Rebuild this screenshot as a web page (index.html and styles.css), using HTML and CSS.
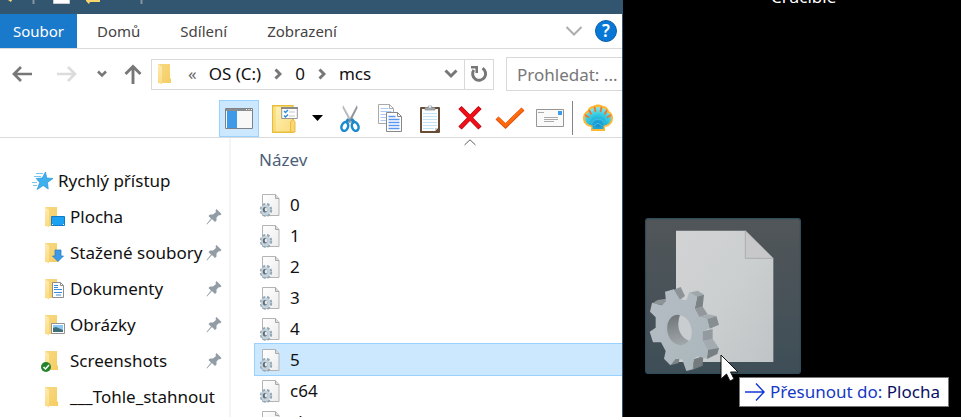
FILE: index.html
```html
<!DOCTYPE html>
<html lang="cs">
<head>
<meta charset="utf-8">
<meta name="viewport" content="width=device-width, initial-scale=1">
<title>mcs</title>
<link rel="stylesheet" href="styles.css">
</head>
<body>
<svg class="defs" aria-hidden="true">
  <defs>
    <linearGradient id="gFolder" x1="0" y1="0" x2="1" y2="1"><stop offset="0" stop-color="#f7d984"/><stop offset="1" stop-color="#f5cd62"/></linearGradient>
    <linearGradient id="gFlap" x1="0" y1="0" x2="0" y2="1"><stop offset="0" stop-color="#ffebb0"/><stop offset="1" stop-color="#fbdb81"/></linearGradient>
    <linearGradient id="gPaper" x1="0" y1="0" x2="1" y2="1"><stop offset="0" stop-color="#fff"/><stop offset="1" stop-color="#ececec"/></linearGradient>
    <linearGradient id="gBoard" x1="0" y1="0" x2="1" y2="1"><stop offset="0" stop-color="#fff3b4"/><stop offset="1" stop-color="#fbdb80"/></linearGradient>
    <linearGradient id="gGhost" x1="0" y1="0" x2="0" y2="1"><stop offset="0" stop-color="#515659"/><stop offset=".5" stop-color="#485258"/><stop offset="1" stop-color="#3e4e57"/></linearGradient>
    <linearGradient id="gSheet" x1="0" y1="0" x2="1" y2="1"><stop offset="0" stop-color="#d2d2d4"/><stop offset=".5" stop-color="#cbcfd0"/><stop offset="1" stop-color="#c1c4c6"/></linearGradient>
    <linearGradient id="gGear" x1="0" y1="0" x2="1" y2="1"><stop offset="0" stop-color="#b5bcc3"/><stop offset="1" stop-color="#aab7bc"/></linearGradient>
    <linearGradient id="gHole" x1="0" y1="0" x2="0" y2="1"><stop offset="0" stop-color="#70767a"/><stop offset="1" stop-color="#a2a8aa"/></linearGradient>
    <radialGradient id="gShell" cx=".5" cy=".8" r=".8"><stop offset="0" stop-color="#1688cc"/><stop offset=".55" stop-color="#2ccbe0"/><stop offset="1" stop-color="#8ceadf"/></radialGradient>
  </defs>
  <symbol id="folder" viewBox="0 0 22 22">
    <path d="M1 1h12v14l1 1v4H1z" fill="url(#gFolder)"/>
    <path d="M1 1l4 3v17.500L1 19z" fill="url(#gFlap)"/>
  </symbol>
  <symbol id="pin" viewBox="0 0 16 16">
    <path d="M10.500 0L15.500 5 14 6.500 13 6 10.500 8.500 10.500 11.500 9 13 6 10 1 15.500.500 15 5 9.500 2.500 7 4 5.500 7 5.500 10 3 9.500 1.500z" fill="#919ca5"/>
  </symbol>
  <symbol id="file" viewBox="0 0 22 24">
    <path d="M3.500 1.500h13l3.500 4v17H3.500z" fill="url(#gPaper)" stroke="#b4b4b4"/>
    <path d="M16.500 1.500v4H20" fill="#ddd" stroke="#a8a8a8"/>
    <ellipse cx="7" cy="17" rx="5" ry="5.800" fill="none" stroke="#93a7b4" stroke-width="2.400" stroke-dasharray="2.600 1.700"/>
    <ellipse cx="6.700" cy="17" rx="4.600" ry="5.300" fill="#c3d2dc"/>
    <ellipse cx="6" cy="16.700" rx="2.200" ry="2.700" fill="#616c75"/>
    <ellipse cx="7" cy="16.400" rx="1.200" ry="2" fill="#e6e9eb"/>
  </symbol>
</svg>

<main class="screen">
  <section class="explorer">
    <div class="titlebar">
      <svg width="150" height="5" viewBox="0 0 150 5" aria-hidden="true">
        <path d="M8 0h4l-1 2z" fill="#f5d778"/>
        <path d="M33.500 0v4M141.500 0v4" stroke="#8793a0" stroke-width="2"/>
        <path d="M53.500-2v5.500h16V-2z" fill="#fff" stroke="#c9ccd2"/>
        <path d="M86 0h14v2H90l-1 2-3-3z" fill="#f9d66c"/>
      </svg>
    </div>

    <nav class="tabs">
      <button class="tab tab-file">Soubor</button>
      <button class="tab">Domů</button>
      <button class="tab">Sdílení</button>
      <button class="tab">Zobrazení</button>
      <button class="expand" aria-label="Rozbalit pás karet"><svg width="18" height="10" viewBox="0 0 18 10"><path d="M1.500 1L9 8.500 16.500 1" fill="none" stroke="#adadad" stroke-width="2"/></svg></button>
      <button class="help" aria-label="Nápověda">?</button>
    </nav>

    <div class="navbar">
      <button class="nav-back" aria-label="Zpět"><svg width="20" height="18" viewBox="0 0 20 18"><path d="M20 9H3M9 2L2 9l7 7" fill="none" stroke="#777" stroke-width="2.700"/></svg></button>
      <button class="nav-forward" aria-label="Vpřed"><svg width="20" height="18" viewBox="0 0 20 18"><path d="M0 9h17M11 2l7 7-7 7" fill="none" stroke="#dcdcdc" stroke-width="2.700"/></svg></button>
      <button class="nav-recent" aria-label="Poslední umístění"><svg width="10" height="8" viewBox="0 0 10 8"><path d="M1 1.500l4 4 4-4" fill="none" stroke="#777" stroke-width="2.500"/></svg></button>
      <button class="nav-up" aria-label="Nahoru"><svg width="18" height="20" viewBox="0 0 18 20"><path d="M9 20V3M1.500 10L9 2.500l7.500 7.500" fill="none" stroke="#777" stroke-width="2.900"/></svg></button>
      <div class="address">
        <svg class="address-icon" width="22" height="22"><use href="#folder"/></svg>
        <span class="overflow">«</span>
        <button class="crumb">OS (C:)</button>
        <svg class="sep" width="8" height="12" viewBox="0 0 8 12"><path d="M1.500 1.500L6 6l-4.500 4.500" fill="none" stroke="#777" stroke-width="3"/></svg>
        <button class="crumb">0</button>
        <svg class="sep" width="8" height="12" viewBox="0 0 8 12"><path d="M1.500 1.500L6 6l-4.500 4.500" fill="none" stroke="#777" stroke-width="3"/></svg>
        <button class="crumb">mcs</button>
        <button class="history" aria-label="Předchozí umístění"><svg width="14" height="10" viewBox="0 0 14 10"><path d="M1.500 1.500L7 7l5.500-5.500" fill="none" stroke="#777" stroke-width="3"/></svg></button>
        <button class="refresh" aria-label="Aktualizovat"><svg width="18" height="18" viewBox="0 0 18 18"><path d="M12.500 3.200A6.500 6.500 0 1 1 3.800 5" fill="none" stroke="#777" stroke-width="3"/><path d="M1 1h7v7H5.500V3.500H1z" fill="#777"/></svg></button>
      </div>
      <input class="search" type="text" placeholder="Prohledat: ..." aria-label="Prohledat">
    </div>

    <div class="toolbar">
      <button class="tool pane" aria-label="Navigační podokno"><svg width="28" height="21" viewBox="0 0 28 21"><path d="M.500.500h27v20H.500z" fill="#f8f8f8" stroke="#7e8286"/><path d="M1 1h26v2H1z" fill="#8a8e91"/><path d="M2 3h10v17H2z" fill="#3e9ae6"/><path d="M21 1.500h1M23.500 1.500h1M26 1.500h1" stroke="#fff"/></svg></button>
      <button class="tool" aria-label="Vlastnosti složky"><svg width="26" height="29" viewBox="0 0 26 29"><path d="M.700 1.700H21v26.500H.700z" fill="url(#gBoard)" stroke="#e7bd3b" stroke-width="1.400"/><path d="M3 2v26" stroke="#f3d15c"/><path d="M18.500 28V18l2.500-3 2 3v10z" fill="#fbd673" stroke="#e7bd3b"/><path d="M9.700 3.500h15.600v11H9.700z" fill="#fff" stroke="#969696"/><path d="M9 4h17" stroke="#8b8b8b" stroke-width="2"/><path d="M12 7l1.500 1.500L16 6M12 11.500l1.500 1.500L16 10.500" fill="none" stroke="#2c8ddd" stroke-width="1.500"/><path d="M17 8h6M17 12h6" stroke="#c5c5c5"/></svg></button>
      <button class="tool more" aria-label="Další možnosti"><svg width="11" height="6" viewBox="0 0 11 6"><path d="M0 0h11L5.500 6z"/></svg></button>
      <button class="tool" aria-label="Vyjmout"><svg width="20" height="28" viewBox="0 0 20 28"><path d="M3 1l9.500 17-2 1L2.500 4z" fill="#b8bcc0"/><path d="M17 1L8 18l2 1 7.500-15z" fill="#8e9499"/><path d="M8.500 15L6 18.500M11.500 15l3 3.500" stroke="#1d87cc" stroke-width="3"/><ellipse cx="4.800" cy="22.500" rx="3.200" ry="4.500" transform="rotate(20 4.800 22.500)" fill="none" stroke="#1d8ad0" stroke-width="2.500"/><ellipse cx="15.200" cy="22.500" rx="3.200" ry="4.500" transform="rotate(-20 15.200 22.500)" fill="none" stroke="#1d8ad0" stroke-width="2.500"/></svg></button>
      <button class="tool" aria-label="Kopírovat"><svg width="24" height="28" viewBox="0 0 24 28"><path d="M.500.500h11l4 4v15H.500z" fill="#fff" stroke="#a9a9a9"/><path d="M11.500.500v4h4" fill="none" stroke="#a9a9a9"/><path d="M2.500 4.500h8M2.500 7.500h11M2.500 10.500h11M2.500 13.500h6M2.500 16.500h6" stroke="#a9cbf5"/><path d="M8.500 8.500h11l4 4v15h-15z" fill="#fff" stroke="#888"/><path d="M19.500 8.500v4h4" fill="none" stroke="#888"/><path d="M10.500 12.500h7M10.500 15.500h11M10.500 18.500h11M10.500 21.500h11M10.500 24.500h11" stroke="#5b98ed" stroke-width="1.300"/></svg></button>
      <button class="tool" aria-label="Vložit"><svg width="20" height="29" viewBox="0 0 20 29"><rect y="3" width="20" height="26" rx="1" fill="#684c36"/><path d="M2 5h16v19l-3 3H2z" fill="#fbfdff"/><path d="M18 24h-3v3z" fill="#c7ced2"/><path d="M3 9.500h14M3 12.500h14M3 15.500h14M3 18.500h14M3 21.500h14M3 24.500h11" stroke="#c3e2f3"/><path d="M5 6V3.500h3a2 2 0 0 1 4 0h3V6z" fill="#a6abaf" stroke="#858b8f" stroke-width=".700"/><circle cx="10" cy="2.500" r="1.200" fill="#f2f2f2"/></svg></button>
      <button class="tool" aria-label="Odstranit"><svg width="26" height="26" viewBox="0 0 26 26"><path d="M3 2.500L23 23M23 2.500L3 23" stroke="#b3000b" stroke-width="4.600"/><path d="M3.500 3L22.500 22.500M22.500 3L3.500 22.500" stroke="#ed1019" stroke-width="3.500"/></svg></button>
      <button class="tool" aria-label="Přejmenovat"><svg width="30" height="24" viewBox="0 0 30 24"><path d="M2 12l8.500 8L28 3" fill="none" stroke="#dc4b0b" stroke-width="4.300"/><path d="M2.500 12.200l8 7.300L27.500 3.200" fill="none" stroke="#ff6a0c" stroke-width="3"/></svg></button>
      <button class="tool" aria-label="Vlastnosti"><svg width="28" height="18" viewBox="0 0 28 18"><path d="M.500.500h27v17H.500z" fill="#fafafa" stroke="#969696"/><path d="M2 3.500h6M8 8.500h14M8 10.500h14M8 12.500h10" stroke="#aaa"/><path d="M22 2h4v4h-4z" fill="#399cf0"/></svg></button>
      <span class="divider"></span>
      <button class="tool" aria-label="Shell"><svg width="30" height="28" viewBox="0 0 30 28"><path d="M8 27v-4C3 22 0 19 0 14c0-4 2-6 4-7 2-4 4-5 6-5 3-2 7-2 10 0 3 0 5 2 6 5 3 2 4 4 4 7 0 5-3 8-8 9v4z" fill="#ffb736"/><path d="M9.500 25v-3.500C5 21 2 18 2 14.500c0-3 1.500-5 3.500-6 1.500-3 3-4.500 6-4.500 2.500-1.500 5-1.500 7 0C21.500 4 23.500 5.500 24.500 8.500c2 1 3.500 3 3.500 6 0 3.500-2.500 6.500-7.500 7V25z" fill="url(#gShell)"/><path d="M2 11l4 2.500M6 6l2.500 4.500M11.500 3l1 5M18.500 3l-1 5M24 6l-2.500 4.500M28 11l-4 2.500" stroke="#ee713a" stroke-width="1.700"/><path d="M6 17a9.500 9.500 0 0 1 18 0M8.500 19.500a7 7 0 0 1 13 0M11 22a4.500 4.500 0 0 1 8 0" fill="none" stroke="#43c3e8"/></svg></button>
    </div>

    <div class="content">
      <aside class="sidebar">
        <a class="place root" href="#"><svg width="22" height="20" viewBox="0 0 22 20"><path d="M13.500 1l1.200 6 6.300.500-5.500 4 .700 6.500-5-3.500-6 4 2.500-7-3.500-4 6-.500z" fill="#3fb0ee" stroke="#2b94d8" stroke-width=".700"/><path d="M4 2.500h7M2 5.500h7M0 11.500h5M1 14.500h4" stroke="#7cc5ed"/></svg>Rychlý přístup</a>
        <a class="place" href="#"><svg width="22" height="22" viewBox="0 0 22 22"><use href="#folder"/><path d="M7.500 10.500h13v9h-13z" fill="#1ba1f2" stroke="#127bc9"/><path d="M8 18.500h12" stroke="#fff" stroke-dasharray="1 10"/></svg><span>Plocha</span><svg class="pin" width="16" height="16"><use href="#pin"/></svg></a>
        <a class="place" href="#"><svg width="22" height="22" viewBox="0 0 22 22"><use href="#folder"/><path d="M11 8h6v6h2.500L14 19.500 8.500 14H11z" fill="#3c9be8" stroke="#2575bd" stroke-width=".700"/></svg><span>Stažené soubory</span><svg class="pin" width="16" height="16"><use href="#pin"/></svg></a>
        <a class="place" href="#"><svg width="22" height="22" viewBox="0 0 22 22"><use href="#folder"/><path d="M8.500 4.500h8l3 3v12h-11z" fill="#fff" stroke="#8d8d8d"/><path d="M16.500 4.500v3h3" fill="none" stroke="#8d8d8d"/><path d="M10 7.500h4M10 9.500h4M10 11.500h8M10 14.500h8M12 17h5" stroke="#368ddb"/></svg><span>Dokumenty</span><svg class="pin" width="16" height="16"><use href="#pin"/></svg></a>
        <a class="place" href="#"><svg width="22" height="22" viewBox="0 0 22 22"><use href="#folder"/><path d="M7.500 9.500h13v10h-13z" fill="#fff" stroke="#929292"/><path d="M9 11h10v7H9z" fill="#8ac9f4"/><path d="M9 14l3-1 7 3v2H9z" fill="#3e6f79"/></svg><span>Obrázky</span><svg class="pin" width="16" height="16"><use href="#pin"/></svg></a>
        <a class="place" href="#"><svg width="22" height="22" viewBox="0 0 22 22"><use href="#folder"/></svg><svg class="badge" width="10" height="10" viewBox="0 0 10 10"><circle cx="5" cy="5" r="5" fill="#23832b"/><path d="M2.500 5l2 2 3.500-4" fill="none" stroke="#fff" stroke-width="1.500"/></svg><span>Screenshots</span><svg class="pin" width="16" height="16"><use href="#pin"/></svg></a>
        <a class="place" href="#"><svg width="22" height="22"><use href="#folder"/></svg><span>___Tohle_stahnout</span></a>
      </aside>

      <div class="listing">
        <button class="column">Název<svg class="sort" width="12" height="7" viewBox="0 0 12 7"><path d="M.500 6L6 .800 11.500 6" fill="none" stroke="#606060"/></svg></button>
        <ul class="files">
          <li><svg width="22" height="24"><use href="#file"/></svg>0</li>
          <li><svg width="22" height="24"><use href="#file"/></svg>1</li>
          <li><svg width="22" height="24"><use href="#file"/></svg>2</li>
          <li><svg width="22" height="24"><use href="#file"/></svg>3</li>
          <li><svg width="22" height="24"><use href="#file"/></svg>4</li>
          <li class="selected"><svg width="22" height="24"><use href="#file"/></svg>5</li>
          <li><svg width="22" height="24"><use href="#file"/></svg>c64</li>
          <li><svg width="22" height="24"><use href="#file"/></svg>cheat</li>
        </ul>
      </div>
    </div>
  </section>

  <section class="desktop">
    <p class="shortcut">Crucible</p>
    <svg class="ghost" width="156" height="156" viewBox="0 0 468 468" aria-hidden="true">
      <rect x="1.500" y="1.500" width="465" height="465" rx="10" fill="url(#gGhost)" stroke="#304b5a" stroke-width="4"/>
      <path d="M93 38h209l83 83v311H93z" fill="url(#gSheet)"/>
      <path d="M301 38v83h84z" fill="#c8c8ca" stroke="#9b9fa2" stroke-width="2"/>
      <g transform="translate(0 186)">
        <path d="M22 70L38 60 64 56 64 66 50 75zM84 30L107 21 120 48 104 60z" fill="#8c9497"/>
        <path d="M132 38L158 32 177 44 156 52z" fill="#a0a7aa"/>
        <path d="M156 50L177 44 173 80 149 87z" fill="#7c8386"/>
        <path d="M149 86L173 80 188 103 163 112z" fill="#92989c"/>
        <path d="M186 118L163 111 190 103 214 108z" fill="#a5adb1"/>
        <path d="M186 118L214 108 222 134 194 146z" fill="#868e91"/>
        <path d="M172 154L203 147 203 178 172 184z" fill="#949ba0"/>
        <path d="M172 182L203 177 222 205 188 212z" fill="#a4abb0"/>
        <path d="M188 210L222 204 217 222 186 237z" fill="#777f82"/>
        <path d="M146 238L175 228 173 257 143 269z" fill="#747b7e"/>
        <path d="M76 256L84 240 104 234 101 249z" fill="#7c8487"/>
        <path d="M60 35L86 28 104 58 124 61 133 37 157 50 149 86 163 111 187 118 193 145 173 154 173 182 189 209 185 236 158 229 146 237 144 268 124 273 112 239 94 235 76 256 57 236 62 213 48 187 24 187 14 155 32 143 32 112 15 95 21 68 50 76 63 64z" fill="url(#gGear)"/>
        <ellipse cx="102" cy="150" rx="35" ry="46" transform="rotate(-12 102 150)" fill="url(#gHole)"/>
        <path d="M105 105c33 7 43 55 29 77-20-3-36-28-34-52 1-9 2-17 5-25z" fill="#c9cdcf"/>
      </g>
    </svg>
    <svg class="pointer" width="19" height="28" viewBox="0 0 19 28" aria-hidden="true"><path d="M1 1v24l5.500-5 3.500 7 4-2-3.500-7H18z" fill="#fff" stroke="#111"/></svg>
    <div class="tip"><svg width="20" height="20" viewBox="0 0 20 20"><path d="M0 10h19M11 1.500l8 8.500-8 8.500" fill="none" stroke="#1539d5" stroke-width="1.500"/></svg><span>Přesunout do: <b>Plocha</b></span></div>
  </section>
</main>
</body>
</html>
```
FILE: styles.css
```css
* {
  box-sizing: border-box;
}

body {
  margin: 0;
  background: #000;
  color: #111;
  font: 17px/24px "Noto Sans", "Open Sans", sans-serif;
}

button,
input {
  margin: 0;
  padding: 0;
  border: 0;
  background: none;
  color: inherit;
  font: inherit;
}

svg {
  display: block;
  flex: none;
}

.defs {
  position: absolute;
  width: 0;
  height: 0;
}

.screen {
  display: grid;
  grid-template-columns: minmax(0, 623fr) minmax(0, 338fr);
  height: 100vh;
  overflow: hidden;
}

.explorer {
  display: flex;
  flex-direction: column;
  min-height: 0;
  overflow: hidden;
  border-right: 1px solid #315570;
  background: #fff;
}

.titlebar {
  flex: none;
  height: 14px;
  background: #32566f;
}

.tabs {
  display: flex;
  flex: none;
  align-items: center;
  height: 35px;
  padding-right: 5px;
  border-bottom: 1px solid #dadbdc;
  color: #444;
}

.tab {
  height: 34px;
  padding: 0 20px;
  font-size: 15px;
}

.tab-file {
  width: 77px;
  padding: 0 8px;
  background: #1979ca;
  color: #fff;
}

.expand {
  margin-left: auto;
  margin-right: 12px;
}

.help {
  width: 22px;
  height: 22px;
  border: 1px solid #0b5eab;
  border-radius: 50%;
  background: #0878d7;
  color: #fff;
  font-weight: 600;
  line-height: 20px;
}

.navbar {
  display: flex;
  flex: none;
  align-items: center;
  height: 50px;
}

.navbar button,
.tool {
  display: flex;
  align-items: center;
  justify-content: center;
}

.nav-back {
  width: 44px;
}

.nav-forward {
  width: 46px;
}

.nav-recent {
  width: 24px;
}

.nav-up {
  width: 37px;
}

.address {
  display: flex;
  flex: 1;
  align-items: center;
  height: 31px;
  border: 1px solid #d9d9d9;
}

.address-icon {
  margin-left: 5px;
}

.overflow {
  margin: 0 12px 0 9px;
  color: #666;
}

.sep {
  margin: 0 13px;
}

.history {
  width: 26px;
  margin-left: auto;
}

.refresh {
  width: 29px;
  height: 29px;
  border-left: 1px solid #d9d9d9;
}

.search {
  flex: 0 0 116px;
  width: 116px;
  height: 34px;
  margin-left: 12px;
  padding-left: 10px;
  border: 1px solid #d9d9d9;
  border-right: 0;
}

.search::placeholder {
  color: #777;
  opacity: 1;
}

.toolbar {
  display: flex;
  flex: none;
  align-items: center;
  justify-content: flex-end;
  height: 39px;
  padding-right: 4px;
  border-bottom: 1px solid #dadbdc;
}

.tool {
  width: 40px;
  height: 37px;
}

.pane {
  margin-right: 6px;
  border: 1px solid #99d1ff;
  background: #cce8ff;
}

.more {
  width: 25px;
}

.divider {
  width: 1px;
  height: 34px;
  margin: 0 5px 0 2px;
  background: #858585;
}

.content {
  display: flex;
  flex: 1;
  min-height: 0;
}

.sidebar {
  flex: none;
  width: 231px;
  padding-top: 25px;
  border-right: 2px solid #f5f5f5;
}

.place {
  position: relative;
  display: flex;
  align-items: center;
  gap: 4px;
  height: 36px;
  padding: 0 7px 0 44px;
  color: inherit;
  text-decoration: none;
  white-space: nowrap;
}

.root {
  padding-left: 32px;
}

.pin {
  margin-left: auto;
}

.badge {
  position: absolute;
  left: 41px;
  top: 19px;
}

.listing {
  flex: 1;
  min-width: 0;
  padding-left: 24px;
}

.column {
  position: relative;
  display: block;
  width: 100%;
  height: 44px;
  padding-left: 4px;
  color: #4c607a;
  text-align: left;
}

.sort {
  position: absolute;
  left: 209px;
  top: 1px;
}

.files {
  margin: 0;
  padding: 7px 0 0;
  list-style: none;
}

.files li {
  display: flex;
  align-items: center;
  gap: 9px;
  height: 31px;
  padding-left: 4px;
}

.files .selected {
  outline: 1px solid #99d1ff;
  background: #cce8ff;
}

.desktop {
  position: relative;
  overflow: hidden;
  background: #000;
}

.shortcut {
  position: absolute;
  left: 148px;
  top: -15px;
  margin: 0;
  color: #fff;
}

.ghost {
  position: absolute;
  left: 22px;
  top: 218px;
}

.pointer {
  position: absolute;
  left: 97px;
  top: 354px;
}

.tip {
  position: absolute;
  left: 116px;
  top: 377px;
  display: flex;
  align-items: center;
  gap: 5px;
  height: 30px;
  padding: 0 8px 0 5px;
  border: 1px solid #777;
  background: #fff;
  color: #1539c4;
  white-space: nowrap;
}

.tip b {
  color: #081163;
  font-weight: 400;
}
```
